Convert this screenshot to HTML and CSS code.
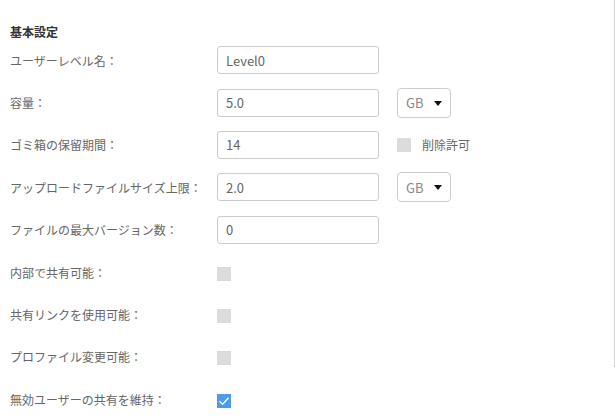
FILE: index.html
```html
<!DOCTYPE html>
<html lang="ja">

<head>
  <meta charset="UTF-8">
  <title>基本設定</title>
  <link rel="stylesheet" href="styles.css">
</head>

<body>
  <div class="panel">
    <h3 class="title">基本設定</h3>

    <div class="row">
      <label class="label">ユーザーレベル名：</label>
      <input class="text" type="text" value="Level0">
    </div>

    <div class="row">
      <label class="label">容量：</label>
      <input class="text" type="text" value="5.0">
      <span class="select">
        <select>
          <option>GB</option>
          <option>MB</option>
        </select>
      </span>
    </div>

    <div class="row">
      <label class="label">ゴミ箱の保留期間：</label>
      <input class="text" type="text" value="14">
      <label class="option"><span class="check"></span>削除許可</label>
    </div>

    <div class="row">
      <label class="label">アップロードファイルサイズ上限：</label>
      <input class="text" type="text" value="2.0">
      <span class="select">
        <select>
          <option>GB</option>
          <option>MB</option>
        </select>
      </span>
    </div>

    <div class="row">
      <label class="label">ファイルの最大バージョン数：</label>
      <input class="text" type="text" value="0">
    </div>

    <div class="row">
      <label class="label">内部で共有可能：</label>
      <span class="check low"></span>
    </div>

    <div class="row">
      <label class="label">共有リンクを使用可能：</label>
      <span class="check low"></span>
    </div>

    <div class="row">
      <label class="label">プロファイル変更可能：</label>
      <span class="check low"></span>
    </div>

    <div class="row">
      <label class="label">無効ユーザーの共有を維持：</label>
      <span class="check low checked">
        <svg width="14" height="14" viewBox="0 0 14 14">
          <path d="M2.5 7.2 L5.6 10.2 L11.6 3.8" fill="none" stroke="#fff" stroke-width="1.3" />
        </svg>
      </span>
    </div>
  </div>
</body>

</html>
```

FILE: styles.css
```css
body {
  margin: 0;
  font-family: "Noto Sans CJK JP", "Noto Sans", sans-serif;
  font-size: 12px;
  color: #666;
  background: #fff;
}

.panel {
  position: relative;
  min-height: 419px;
  padding: 24px 0 0 10px;
  box-sizing: border-box;
}

/* right edge of the settings pane, shorter than the form */
.panel::after {
  content: "";
  position: absolute;
  top: 0;
  right: 0;
  height: 367px;
  border-right: 1px solid #d4d4d4;
}

.title {
  margin: 0;
  font-size: 12px;
  line-height: 15px;
  font-weight: bold;
  color: #333;
}

.row {
  display: flex;
  align-items: center;
  height: 42.4px;
}

.label {
  width: 207px;
  flex-shrink: 0;
  white-space: nowrap;
}

.text {
  width: 162px;
  height: 28px;
  box-sizing: border-box;
  padding: 0 8px;
  border: 1px solid #ccc;
  border-radius: 3px;
  font-family: inherit;
  font-size: 13px;
  color: #666;
  outline: none;
}

.select {
  position: relative;
  margin-left: 18px;
}

.select select {
  appearance: none;
  width: 54px;
  height: 30px;
  padding: 0 8px;
  border: 1px solid #ccc;
  border-radius: 4px;
  background: #fff;
  font-family: inherit;
  font-size: 13px;
  color: #888;
}

.select::after {
  content: "";
  position: absolute;
  right: 9px;
  top: 13px;
  border-left: 4px solid transparent;
  border-right: 4px solid transparent;
  border-top: 5px solid #111;
  pointer-events: none;
}

.option {
  display: flex;
  align-items: center;
  margin-left: 18px;
}

.option .check {
  margin-right: 11px;
}

.check {
  display: inline-block;
  width: 14px;
  height: 14px;
  background: #dcdcdc;
}

.check.low {
  margin-top: 3px;
}

.check.checked {
  background: #4d9bef;
}

.check svg {
  display: block;
}
```
